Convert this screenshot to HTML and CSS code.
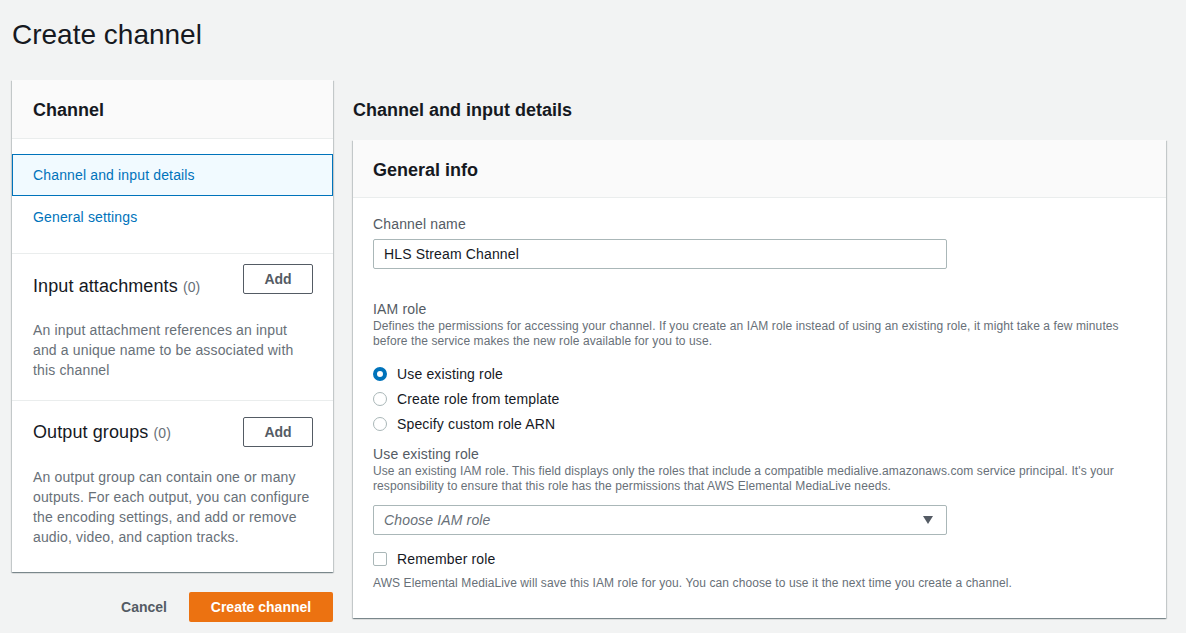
FILE: index.html
```html
<!DOCTYPE html>
<html lang="en">
<head>
<meta charset="utf-8">
<title>Create channel</title>
<link rel="stylesheet" href="styles.css">
</head>
<body>
<div class="page">
  <h1 class="page-title">Create channel</h1>
  <div class="layout">
    <aside class="side">
      <div class="card side-card">
        <div class="card-header"><h2 class="card-title">Channel</h2></div>
        <nav class="nav">
          <a class="nav-item nav-item-active">Channel and input details</a>
          <a class="nav-item">General settings</a>
        </nav>
        <section class="side-section side-section-first">
          <div class="side-row side-row-first">
            <h3 class="side-title">Input attachments <span class="count">(0)</span></h3>
            <button class="btn-add">Add</button>
          </div>
          <p class="side-desc side-desc-first">An input attachment references an input and a unique name to be associated with this channel</p>
        </section>
        <section class="side-section side-section-second">
          <div class="side-row">
            <h3 class="side-title">Output groups <span class="count">(0)</span></h3>
            <button class="btn-add">Add</button>
          </div>
          <p class="side-desc side-desc-second">An output group can contain one or many outputs. For each output, you can configure the encoding settings, and add or remove audio, video, and caption tracks.</p>
        </section>
      </div>
      <div class="actions">
        <button class="btn-cancel">Cancel</button>
        <button class="btn-primary">Create channel</button>
      </div>
    </aside>
    <main class="main">
      <h2 class="section-heading">Channel and input details</h2>
      <div class="card main-card">
        <div class="card-header main-header"><h2 class="card-title">General info</h2></div>
        <div class="card-body">
          <label class="field-label">Channel name</label>
          <div class="text-input">HLS Stream Channel</div>

          <label class="field-label field-label-iam">IAM role</label>
          <p class="field-desc">Defines the permissions for accessing your channel. If you create an IAM role instead of using an existing role, it might take a few minutes before the service makes the new role available for you to use.</p>

          <div class="radios">
            <div class="radio-row"><span class="radio radio-checked"></span><span class="radio-label">Use existing role</span></div>
            <div class="radio-row"><span class="radio"></span><span class="radio-label">Create role from template</span></div>
            <div class="radio-row"><span class="radio"></span><span class="radio-label">Specify custom role ARN</span></div>
          </div>

          <label class="field-label field-label-existing">Use existing role</label>
          <p class="field-desc">Use an existing IAM role. This field displays only the roles that include a compatible medialive.amazonaws.com service principal. It's your responsibility to ensure that this role has the permissions that AWS Elemental MediaLive needs.</p>

          <div class="select">
            <span class="select-placeholder">Choose IAM role</span>
            <svg class="select-caret" width="10" height="8" viewBox="0 0 10 8"><path d="M0 0 H10 L5 8 Z" fill="#545b64"/></svg>
          </div>

          <div class="check-row"><span class="checkbox"></span><span class="radio-label">Remember role</span></div>
          <p class="field-desc check-desc">AWS Elemental MediaLive will save this IAM role for you. You can choose to use it the next time you create a channel.</p>
        </div>
      </div>
    </main>
  </div>
</div>
</body>
</html>
```

FILE: styles.css
```css
* { box-sizing: border-box; }
html, body { margin: 0; padding: 0; }
body {
  background: #f2f3f3;
  font-family: "Liberation Sans", Arial, sans-serif;
  color: #16191f;
  font-size: 14px;
  line-height: 20px;
  letter-spacing: 0.15px;
}
.page { padding: 17px 20px 0 12px; }
.page-title {
  margin: 0;
  font-size: 28px;
  line-height: 36px;
  font-weight: 400;
  letter-spacing: 0;
  color: #16191f;
}
.layout {
  display: grid;
  grid-template-columns: 321px 813px;
  column-gap: 20px;
  margin-top: 27px;
  align-items: start;
}
.card {
  background: #fff;
  box-shadow: 0 1px 1px 0 rgba(0,28,36,.3), 1px 1px 1px 0 rgba(0,28,36,.15), -1px 1px 1px 0 rgba(0,28,36,.15);
}
.card-header {
  background: #fafafa;
  border-bottom: 1px solid #eaeded;
  padding: 19px 20px 17px 21px;
}
.main-header { padding: 19px 20px 16px 20px; }
.card-title {
  margin: 0;
  font-size: 18px;
  line-height: 22px;
  font-weight: 700;
  letter-spacing: 0;
}
.nav {
  display: flex;
  flex-direction: column;
  padding: 15px 0;
  border-bottom: 1px solid #eaeded;
}
.nav-item {
  display: block;
  padding: 10px 20px;
  border: 1px solid transparent;
  color: #0073bb;
  line-height: 20px;
}
.nav-item-active {
  background: #f1faff;
  border-color: #0073bb;
}
.side-section { padding: 0 21px 20px 21px; }
.side-section-first { padding-top: 10px; border-bottom: 1px solid #eaeded; }
.side-section-second { padding-top: 16px; padding-bottom: 25px; }
.side-row {
  display: flex;
  justify-content: space-between;
  align-items: center;
}
.side-row-first { align-items: flex-start; }
.side-row-first .side-title { margin-top: 11px; }
.side-title {
  margin: 0;
  font-size: 18px;
  line-height: 22px;
  font-weight: 400;
  letter-spacing: 0.1px;
}
.count { font-size: 14px; color: #687078; }
.btn-add {
  width: 70px;
  height: 30px;
  background: #fff;
  border: 1px solid #545b64;
  border-radius: 2px;
  font-family: inherit;
  font-size: 14px;
  font-weight: 700;
  color: #545b64;
  padding: 0 0 1px;
  margin-right: -1px;
}
.side-desc {
  margin: 0;
  color: #687078;
  line-height: 20px;
}
.side-desc-first { margin-top: 22px; }
.side-desc-second { margin-top: 20px; }
.actions {
  display: flex;
  justify-content: flex-end;
  margin-top: 20px;
}
.btn-cancel {
  background: none;
  border: 0;
  font-family: inherit;
  font-size: 14px;
  font-weight: 700;
  color: #545b64;
  padding: 0 22px;
  height: 30px;
}
.btn-primary {
  width: 144px;
  height: 30px;
  background: #ec7211;
  border: 0;
  border-radius: 2px;
  color: #fff;
  font-family: inherit;
  font-size: 14px;
  font-weight: 700;
}
.section-heading {
  margin: 19px 0 19px;
  font-size: 18px;
  line-height: 22px;
  font-weight: 700;
  letter-spacing: 0;
}
.card-body { padding: 16px 20px 27px; }
.field-label {
  display: block;
  color: #545b64;
  line-height: 20px;
}
.text-input {
  margin-top: 5px;
  width: 574px;
  height: 30px;
  border: 1px solid #aab7b8;
  border-radius: 2px;
  padding: 4px 10px;
  color: #16191f;
  line-height: 20px;
}
.field-label-iam { margin-top: 30px; }
.field-desc {
  margin: 0;
  font-size: 12px;
  line-height: 15px;
  color: #687078;
  letter-spacing: 0.1px;
}
.radios { margin-top: 12px; }
.radio-row {
  display: flex;
  align-items: center;
  height: 25px;
}
.radio {
  width: 14px;
  height: 14px;
  border-radius: 50%;
  border: 1px solid #aab7b8;
  margin-right: 10px;
  flex: none;
}
.radio-checked { border: 4px solid #0073bb; }
.radio-label { color: #16191f; }
.field-label-existing { margin-top: 8px; }
.select {
  margin-top: 11px;
  width: 574px;
  height: 30px;
  border: 1px solid #aab7b8;
  border-radius: 2px;
  padding: 0 13px 0 10px;
  display: flex;
  align-items: center;
  justify-content: space-between;
}
.select-placeholder { font-style: italic; color: #687078; }
.check-row {
  display: flex;
  align-items: center;
  margin-top: 14px;
  height: 20px;
}
.checkbox {
  width: 14px;
  height: 14px;
  border: 1px solid #aab7b8;
  border-radius: 2px;
  margin-right: 10px;
  flex: none;
}
.check-desc { margin-top: 7px; }
```
